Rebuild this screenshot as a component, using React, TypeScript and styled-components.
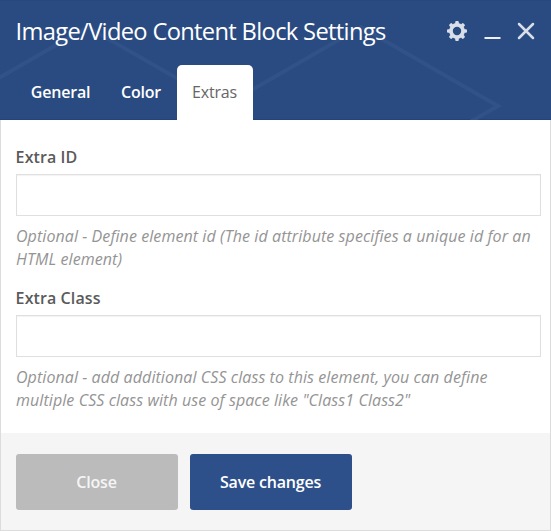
import React from "react";
import styled, { createGlobalStyle } from "styled-components";

const GlobalStyle = createGlobalStyle`
  *, *::before, *::after { box-sizing: border-box; }
  body { margin: 0; font-family: "Open Sans", "Noto Sans", sans-serif; }
`;

const Panel = styled.section`
  display: flex;
  flex-direction: column;
  width: 551px;
  height: 531px;
  background: #fff;
`;

const Header = styled.header`
  position: relative;
  display: flex;
  flex-direction: column;
  justify-content: space-between;
  height: 120px;
  flex: none;
  background: #2a4b81;
  box-shadow: inset 0 1px 0 #28477a, inset 0 -1px 0 #23437a;
`;

const Pattern = styled.svg`
  position: absolute;
  inset: 0;
  pointer-events: none;
`;

const TitleBar = styled.div`
  position: relative;
  display: flex;
  align-items: center;
  justify-content: space-between;
  height: 62px;
  padding: 0 16px 0 15.6px;
`;

const Title = styled.h1`
  margin: 0;
  font-size: 23.7px;
  font-weight: 400;
  line-height: 32px;
  letter-spacing: -0.67px;
  white-space: nowrap;
  color: #fff;
`;

const Controls = styled.div`
  display: flex;
  align-items: center;
  gap: 16.5px;
`;

const Control = styled.button<{ $width: number; $color?: string }>`
  display: flex;
  width: ${(p) => p.$width}px;
  padding: 0;
  border: 0;
  background: none;
  color: ${(p) => p.$color ?? "#d9dfe9"};
`;

const Tabs = styled.nav`
  position: relative;
  display: flex;
  padding-left: 16px;
`;

const Tab = styled.button<{ $active?: boolean; $width: number }>`
  width: ${(p) => p.$width}px;
  height: 55px;
  padding: ${(p) => (p.$active ? "0 1px 0 0" : "0")};
  border: 0;
  border-radius: 5px 5px 0 0;
  background: ${(p) => (p.$active ? "#fff" : "transparent")};
  color: ${(p) => (p.$active ? "#666" : "#fff")};
  font: ${(p) => (p.$active ? 400 : 600)} 16px/23px "Open Sans", "Noto Sans", sans-serif;
  letter-spacing: -0.2px;
`;

const Body = styled.main`
  flex: 1;
  padding: 26px 9px 0 15px;
  border: solid #dcdcdc;
  border-width: 0 1px;
`;

const Field = styled.div`
  height: 141px;
`;

const Label = styled.label`
  display: block;
  font-size: 16px;
  font-weight: 600;
  line-height: 23px;
  letter-spacing: 0.1px;
  text-indent: -0.4px;
  color: #5a5a5a;
`;

const Input = styled.input`
  display: block;
  width: 100%;
  height: 42px;
  margin-top: 5px;
  padding: 0 10px;
  border: 1px solid #dfdfdf;
  background: #fff;
  box-shadow: inset 0 1px 1px rgba(0, 0, 0, 0.05);
  font: inherit;
  outline: none;
`;

const Hint = styled.p`
  margin: 9px 0 0;
  font-size: 16px;
  font-style: italic;
  line-height: 23px;
  letter-spacing: 0.08px;
  white-space: nowrap;
  color: #949494;
`;

const Footer = styled.footer`
  display: flex;
  gap: 12px;
  height: 98px;
  padding: 21px 15px;
  border: solid #dcdcdc;
  border-width: 0 1px 1px;
  background: #f5f5f5;
`;

const Button = styled.button<{ $primary?: boolean }>`
  width: 162px;
  height: 56px;
  padding: 0 1px 0 0;
  border: 0;
  border-radius: 3px;
  background: ${(p) => (p.$primary ? "#2d508b" : "#bbb")};
  color: ${(p) => (p.$primary ? "#fff" : "#f5f5f5")};
  font: 600 16px/23px "Open Sans", "Noto Sans", sans-serif;
  letter-spacing: -0.2px;
`;

const teeth = [0, 45, 90, 135, 180, 225, 270, 315];

export default function App() {
  return (
    <>
      <GlobalStyle />
      <Panel>
        <Header>
          <Pattern width="551" height="120" viewBox="0 0 551 120" fill="none" stroke="#305289" strokeWidth="4">
            <path d="M-2 78.5L87.5 27L180 80" />
            <path d="M250 91L361 27L498 106L470 122" />
          </Pattern>
          <TitleBar>
            <Title>Image/Video Content Block Settings</Title>
            <Controls>
              <Control $width={20} aria-label="Options">
                <svg width="20" height="20" viewBox="-10 -10 20 20">
                  <circle r="6.05" fill="none" stroke="currentColor" strokeWidth="3.7" />
                  {teeth.map((a) => (
                    <rect key={a} x="-1.8" y="-10" width="3.6" height="4" rx="1.1" fill="currentColor" transform={`rotate(${a})`} />
                  ))}
                </svg>
              </Control>
              <Control $width={17} $color="#edf0f5" aria-label="Minimize">
                <svg width="17" height="20" viewBox="0 0 17 20">
                  <path d="M0.5 17H16.5" stroke="currentColor" strokeWidth="2" />
                </svg>
              </Control>
              <Control $width={18} aria-label="Close panel">
                <svg width="18" height="20" viewBox="0 0 18 20">
                  <path d="M2 3L16 17M16 3L2 17" stroke="currentColor" strokeWidth="2.5" strokeLinecap="round" />
                </svg>
              </Control>
            </Controls>
          </TitleBar>
          <Tabs>
            <Tab $width={89}>General</Tab>
            <Tab $width={72}>Color</Tab>
            <Tab $width={76} $active>Extras</Tab>
          </Tabs>
        </Header>
        <Body>
          <Field>
            <Label htmlFor="extra-id">Extra ID</Label>
            <Input id="extra-id" />
            <Hint>
              Optional - Define element id (The id attribute specifies a unique id for an
              <br />
              HTML element)
            </Hint>
          </Field>
          <Field>
            <Label htmlFor="extra-class">Extra Class</Label>
            <Input id="extra-class" />
            <Hint>
              Optional - add additional CSS class to this element, you can define
              <br />
              multiple CSS class with use of space like "Class1 Class2"
            </Hint>
          </Field>
        </Body>
        <Footer>
          <Button>Close</Button>
          <Button $primary>Save changes</Button>
        </Footer>
      </Panel>
    </>
  );
}
